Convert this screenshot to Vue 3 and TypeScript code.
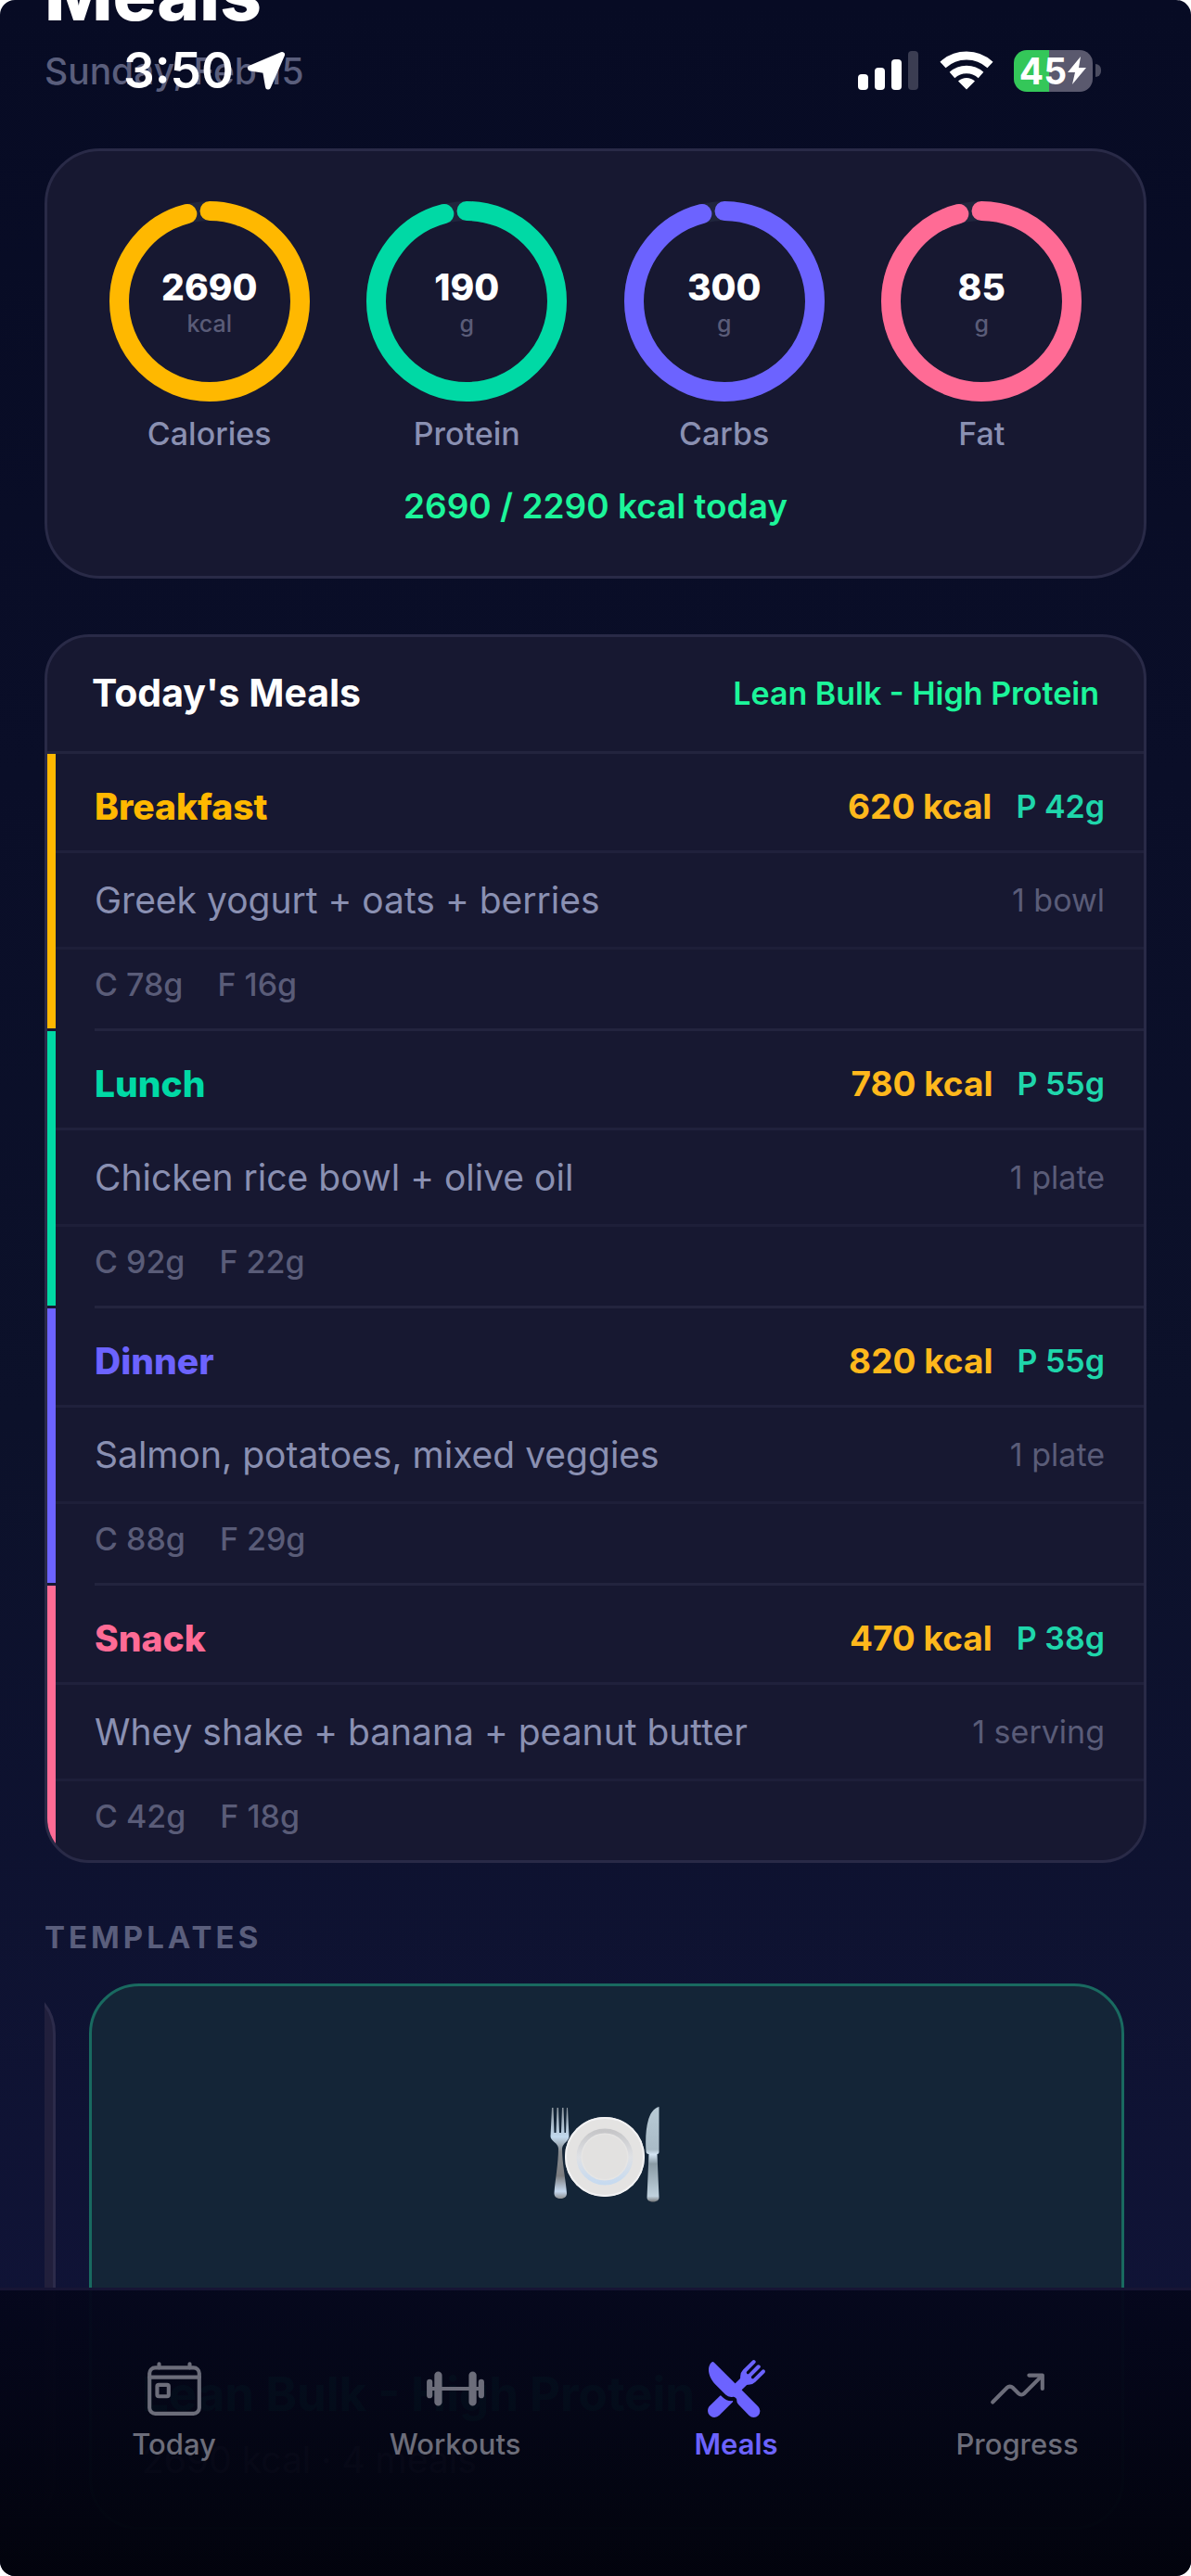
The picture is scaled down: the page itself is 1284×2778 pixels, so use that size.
<script setup lang="ts">
import { onMounted, ref } from 'vue'

interface Macro {
  label: string
  value: number
  unit: string
  tone: string
}

interface Meal {
  name: string
  tone: string
  kcal: number
  protein: number
  food: string
  portion: string
  carbs: number
  fat: number
}

const macros: Macro[] = [
  { label: 'Calories', value: 2690, unit: 'kcal', tone: 'amber' },
  { label: 'Protein', value: 190, unit: 'g', tone: 'mint' },
  { label: 'Carbs', value: 300, unit: 'g', tone: 'violet' },
  { label: 'Fat', value: 85, unit: 'g', tone: 'rose' },
]

const meals: Meal[] = [
  { name: 'Breakfast', tone: 'amber', kcal: 620, protein: 42, food: 'Greek yogurt + oats + berries', portion: '1 bowl', carbs: 78, fat: 16 },
  { name: 'Lunch', tone: 'mint', kcal: 780, protein: 55, food: 'Chicken rice bowl + olive oil', portion: '1 plate', carbs: 92, fat: 22 },
  { name: 'Dinner', tone: 'violet', kcal: 820, protein: 55, food: 'Salmon, potatoes, mixed veggies', portion: '1 plate', carbs: 88, fat: 29 },
  { name: 'Snack', tone: 'rose', kcal: 470, protein: 38, food: 'Whey shake + banana + peanut butter', portion: '1 serving', carbs: 42, fat: 18 },
]

// The carousel opens on the active template, the last one in the track.
const track = ref<HTMLElement | null>(null)
onMounted(() => {
  if (track.value) track.value.scrollLeft = track.value.scrollWidth
})
</script>

<template>
  <div class="screen">
    <main class="content">
      <header class="page-head">
        <h1>Meals</h1>
        <p>Sunday, Feb 15</p>
      </header>

      <section class="card summary">
        <div class="rings">
          <div v-for="m in macros" :key="m.label" class="macro" :class="m.tone">
            <div class="ring">
              <svg viewBox="0 0 216 216" aria-hidden="true">
                <circle class="ring-track" cx="108" cy="108" r="97.5" />
                <circle class="ring-fill" cx="108" cy="108" r="97.5" pathLength="100" transform="rotate(-90 108 108)" />
              </svg>
              <div class="ring-text">
                <strong>{{ m.value }}</strong>
                <span>{{ m.unit }}</span>
              </div>
            </div>
            <span class="macro-label">{{ m.label }}</span>
          </div>
        </div>
        <p class="total">2690 / 2290 kcal today</p>
      </section>

      <section class="card today">
        <header class="today-head">
          <h2>Today's Meals</h2>
          <span>Lean Bulk - High Protein</span>
        </header>
        <ul class="meals">
          <li v-for="meal in meals" :key="meal.name">
            <article class="meal" :class="meal.tone">
              <div class="meal-head">
                <h3>{{ meal.name }}</h3>
                <span class="kcal">{{ meal.kcal }} kcal</span>
                <span class="protein">P {{ meal.protein }}g</span>
              </div>
              <div class="meal-food">
                <span>{{ meal.food }}</span>
                <span class="portion">{{ meal.portion }}</span>
              </div>
              <div class="meal-meta">
                <span>C {{ meal.carbs }}g</span>
                <span>F {{ meal.fat }}g</span>
              </div>
            </article>
          </li>
        </ul>
      </section>

      <h2 class="section-title">TEMPLATES</h2>
      <div ref="track" class="templates">
        <article class="template"></article>
        <article class="template active">
          <div class="template-art">
            <svg viewBox="2 0 124 108" width="124" height="108" role="img" aria-label="Plate with fork and knife">
              <defs>
                <linearGradient id="steel" x1="0" y1="0" x2="0" y2="1">
                  <stop offset="0" stop-color="#8b949c" />
                  <stop offset="0.32" stop-color="#c3daee" />
                  <stop offset="0.48" stop-color="#85898d" />
                  <stop offset="0.75" stop-color="#7c7d80" />
                  <stop offset="0.92" stop-color="#c5d9f0" />
                  <stop offset="1" stop-color="#8e9092" />
                </linearGradient>
                <linearGradient id="blade" x1="0" y1="0" x2="0" y2="1">
                  <stop offset="0" stop-color="#b9cbd6" />
                  <stop offset="0.45" stop-color="#a9bbc6" />
                  <stop offset="0.5" stop-color="#d5e6f5" />
                  <stop offset="0.6" stop-color="#8a9ba5" />
                  <stop offset="0.94" stop-color="#c0d2de" />
                  <stop offset="1" stop-color="#77797b" />
                </linearGradient>
                <linearGradient id="rim" x1="0" y1="0" x2="0" y2="1">
                  <stop offset="0" stop-color="#c6c6c8" />
                  <stop offset="0.5" stop-color="#dfe1e5" />
                  <stop offset="1" stop-color="#c6daf0" />
                </linearGradient>
              </defs>
              <path fill="url(#steel)" d="M5 2h1.500l1 27h2l1-27h1.500l1 27h2l1-27h1.500l1 27h1.500l1-27h1l1.500 31c0 5-7 7-7.500 13 0 16 4 34 5 48 .5 8-14 8-13.500 0 1-14 4.500-32 4.500-48C12 40 3.500 38 3.500 33z" />
              <circle cx="62" cy="55" r="43" fill="#e4e3e2" />
              <circle cx="62" cy="55" r="42" fill="none" stroke="#f2f2f3" stroke-width="2" />
              <circle cx="62" cy="55" r="28" fill="#e6e5e4" stroke="url(#rim)" stroke-width="5" />
              <circle cx="62" cy="55" r="24" fill="#e2e1e0" />
              <path fill="url(#blade)" d="M120.500 1v49q0 2-2 2l2 47c0 6-13 6-13 0l2-47q-3 0-3-3C105 27 108 4 120.500 1z" />
            </svg>
          </div>
          <h3>Lean Bulk - High Protein</h3>
          <p>2690 kcal · 4 meals</p>
        </article>
      </div>
    </main>

    <div class="status-bar">
      <div class="clock">
        <span>3:50</span>
        <svg viewBox="0 0 42 42" width="42" height="42" aria-hidden="true">
          <path d="M38 4L4 18.500L20 21L23 38.500Z" fill="#fff" stroke="#fff" stroke-width="6" stroke-linejoin="round" />
        </svg>
      </div>
      <div class="indicators">
        <svg viewBox="0 0 66 42" width="66" height="42" aria-hidden="true" fill="#fff">
          <rect x="0" y="25" width="11" height="17" rx="4" />
          <rect x="18" y="18" width="11" height="24" rx="4" />
          <rect x="36" y="9" width="11" height="33" rx="4" />
          <rect x="54" y="0" width="11" height="42" rx="4" fill="#3b3d52" />
        </svg>
        <svg viewBox="0 0 58 42" width="58" height="42" aria-hidden="true" fill="none" stroke="#fff">
          <path d="M3.500 15A37.500 37.500 0 0 1 54.500 15" stroke-width="9" />
          <path d="M13.500 26A23.300 23.300 0 0 1 44.500 26" stroke-width="8.500" />
          <path d="M29 41.500L20 32.500A13 13 0 0 1 38 32.500Z" fill="#fff" stroke="none" />
        </svg>
        <div class="battery">
          <div class="battery-body">
            <span>45</span>
            <svg viewBox="0 0 22 32" width="22" height="32" aria-hidden="true">
              <path d="M15 1L1 18h8L6 31L21 13h-8z" fill="#fff" />
            </svg>
          </div>
          <div class="battery-tip"></div>
        </div>
      </div>
    </div>

    <nav class="tabs">
      <a href="#today">
        <svg viewBox="0 0 512 512" aria-hidden="true" fill="none" stroke="currentColor" stroke-width="32" stroke-linecap="round" stroke-linejoin="round">
          <rect x="48" y="80" width="416" height="384" rx="48" />
          <path d="M128 48v32M384 48v32M464 160H48" />
          <rect x="112" y="224" width="96" height="96" rx="13" />
        </svg>
        <span>Today</span>
      </a>
      <a href="#workouts">
        <svg viewBox="0 0 512 512" aria-hidden="true" fill="currentColor" stroke="currentColor" stroke-width="32" stroke-linecap="round" stroke-linejoin="round">
          <path d="M48 256h416" />
          <rect x="384" y="128" width="32" height="256" rx="16" />
          <rect x="96" y="128" width="32" height="256" rx="16" />
          <rect x="32" y="192" width="16" height="128" rx="8" />
          <rect x="464" y="192" width="16" height="128" rx="8" />
        </svg>
        <span>Workouts</span>
      </a>
      <a href="#meals" class="current" aria-current="page">
        <svg viewBox="0 0 512 512" aria-hidden="true" fill="currentColor">
          <path d="M357.57 223.94a79.48 79.48 0 0056.58-23.44l77-76.95c6.09-6.09 6.65-16 .85-22.39a16 16 0 00-23.17-.56l-68.63 68.58a12.29 12.29 0 01-17.37 0c-4.79-4.78-4.530-12.860.25-17.640l68.330-68.330a16 16 0 00-.56-23.160A15.620 15.620 0 00440.270 56a16.710 16.710 0 00-11.810 4.900l-68.270 68.260a12.290 12.290 0 01-17.370 0c-4.780-4.780-4.530-12.860.25-17.640l68.330-68.310a16 16 0 00-.56-23.160A15.620 15.620 0 00400.260 16a16.730 16.730 0 00-11.810 4.900L311.500 97.850a79.490 79.490 0 00-23.440 56.590v8.230a16 16 0 01-4.690 11.330l-35.610 35.620a4 4 0 01-5.660 0L68.820 36.330a16 16 0 00-22.580-.06C31.090 51.280 23 72.470 23 97.540c-.1 41.400 21.660 89 56.790 124.080l85.450 85.450A64.790 64.790 0 00211 326a64 64 0 0016.210-2.080 16.240 16.240 0 014.070-.53 15.930 15.930 0 0110.830 4.250l11.390 10.520a16.120 16.120 0 014.600 11.230v5.540a47.730 47.730 0 0013.770 33.650l90.050 91.570.09.1a53.290 53.290 0 0075.360-75.370L302.390 269.900a4 4 0 010-5.660L338 228.630a16 16 0 0111.320-4.690z" />
          <path d="M211 358a97.320 97.320 0 01-68.360-28.250l-13.860-13.860a8 8 0 00-11.300 0l-85 84.560c-15.150 15.150-20.560 37.450-13.060 59.290a30.630 30.630 0 001.490 3.600C31 484 50.580 496 72 496a55.680 55.680 0 0039.640-16.440L225 365.660a4.690 4.690 0 001.320-3.720v-.26a4.630 4.630 0 00-5.150-4.270A97.090 97.090 0 01211 358z" />
        </svg>
        <span>Meals</span>
      </a>
      <a href="#progress">
        <svg viewBox="0 0 512 512" aria-hidden="true" fill="none" stroke="currentColor" stroke-width="32" stroke-linecap="round" stroke-linejoin="round">
          <path d="M352 144h112v112" />
          <path d="M48 368l121.370-121.370a32 32 0 0145.260 0l50.740 50.740a32 32 0 0045.260 0L448 160" />
        </svg>
        <span>Progress</span>
      </a>
    </nav>
  </div>
</template>

<style>
body {
  margin: 0;
  background: #fff;
}
</style>

<style scoped>
.screen {
  position: relative;
  height: 100vh;
  overflow: hidden;
  border-radius: 16px;
  background: linear-gradient(180deg, #070b24 0%, #0a0e28 30%, #0c112a 55%, #11143a 100%);
  color: #fff;
  font-family: Inter, "Liberation Sans", sans-serif;
}

h1, h2, h3, p, ul {
  margin: 0;
  padding: 0;
}

svg {
  display: block;
}

.amber { --tone: #ffb800; }
.mint { --tone: #00d9a5; }
.violet { --tone: #6c63ff; }
.rose { --tone: #ff6b95; }

.content {
  padding: 0 48px;
}

/* The page is scrolled, so the title is partly above the top edge. */
.page-head {
  margin-top: -54px;
  padding-bottom: 59px;
}

.page-head h1 {
  font-size: 78px;
  line-height: 96px;
  font-weight: 800;
}

.page-head p {
  margin-top: 11px;
  font-size: 39px;
  line-height: 48px;
  font-weight: 500;
  color: #5a5e7c;
}

.card {
  border: 3px solid #292a47;
  background: #171831;
}

.summary {
  border-radius: 60px;
  padding: 54px 36px 51px;
}

.rings {
  display: grid;
  grid-template-columns: repeat(4, 1fr);
}

.macro {
  display: flex;
  flex-direction: column;
  align-items: center;
  gap: 14px;
}

.ring {
  display: grid;
  width: 216px;
  height: 216px;
}

.ring > * {
  grid-area: 1 / 1;
}

.ring circle {
  fill: none;
  stroke-width: 21;
}

.ring-track {
  stroke: #20253d;
}

.ring-fill {
  stroke: var(--tone);
  stroke-linecap: round;
  stroke-dasharray: 96 100;
}

.ring-text {
  display: flex;
  flex-direction: column;
  align-items: center;
  justify-content: center;
}

.ring-text strong {
  font-size: 39px;
  line-height: 48px;
  font-weight: 800;
}

.ring-text span {
  font-size: 25px;
  line-height: 30px;
  font-weight: 500;
  color: #5a5c78;
}

.macro-label {
  font-size: 34px;
  line-height: 42px;
  font-weight: 500;
  color: #8a90b2;
}

.total {
  margin-top: 33px;
  font-size: 37px;
  line-height: 48px;
  font-weight: 600;
  text-align: center;
  color: #1cf59a;
}

.today {
  margin-top: 60px;
  border-radius: 48px;
  overflow: hidden;
}

.today-head {
  display: flex;
  align-items: center;
  justify-content: space-between;
  padding: 35px 48px 37px;
  border-bottom: 3px solid #23243e;
}

.today-head h2 {
  font-size: 41px;
  line-height: 51px;
  font-weight: 700;
}

.today-head span {
  font-size: 34px;
  line-height: 42px;
  font-weight: 600;
  color: #1cf59a;
}

.meals {
  list-style: none;
}

.meals li + li::before {
  content: "";
  display: block;
  height: 3px;
  margin-left: 51px;
  background: #23243e;
}

.meal {
  border-left: 9px solid var(--tone);
}

.meal-head,
.meal-food,
.meal-meta {
  display: flex;
  align-items: center;
}

.meal-head {
  gap: 26px;
  padding: 33px 42px 23px;
  border-bottom: 3px solid #20213c;
}

.meal-head h3 {
  flex: 1;
  font-size: 39px;
  line-height: 48px;
  font-weight: 800;
  color: var(--tone);
}

.kcal {
  font-size: 37px;
  line-height: 42px;
  font-weight: 700;
  color: #ffb81c;
}

.protein {
  font-size: 34px;
  line-height: 42px;
  font-weight: 600;
  color: #1fd6ab;
}

.meal-food {
  justify-content: space-between;
  padding: 27px 42px 26px;
  border-bottom: 3px solid #1e1f39;
  font-size: 39px;
  line-height: 48px;
  color: #8a90b2;
}

.portion {
  font-size: 34px;
  line-height: 42px;
  color: #5a5c78;
}

.meal-meta {
  gap: 37px;
  padding: 17px 42px 26px;
  font-size: 34px;
  line-height: 42px;
  font-weight: 500;
  color: #5a5c78;
}

.section-title {
  margin: 59px 0 29px;
  font-size: 33px;
  line-height: 42px;
  font-weight: 700;
  letter-spacing: 4px;
  color: #5a5e7c;
}

.templates {
  display: flex;
  gap: 36px;
  padding-right: 24px;
  overflow-x: auto;
  scrollbar-width: none;
}

.template {
  box-sizing: border-box;
  flex: 0 0 calc(100% - 48px);
  padding: 0 54px 48px;
  border: 3px solid #2c2b4a;
  border-radius: 54px;
  background: #211f3c;
}

.template.active {
  border-color: #196a60;
  background: #142537;
}

.template-art {
  display: flex;
  align-items: center;
  justify-content: center;
  height: 366px;
  margin-bottom: 44px;
}

.template h3 {
  font-size: 51px;
  line-height: 60px;
  font-weight: 700;
  color: #00d9a5;
}

.template p {
  margin-top: 17px;
  font-size: 39px;
  line-height: 48px;
  color: #8a90b2;
}

.status-bar {
  position: absolute;
  top: 0;
  left: 0;
  right: 0;
  display: flex;
  align-items: center;
  justify-content: space-between;
  height: 152px;
  padding: 0 97px 0 133px;
}

.clock,
.indicators,
.battery,
.battery-body {
  display: flex;
  align-items: center;
}

.clock {
  gap: 14px;
  font-size: 53px;
  line-height: 60px;
  font-weight: 600;
}

.indicators {
  gap: 22px;
}

.battery {
  gap: 3px;
}

.battery-body {
  justify-content: center;
  width: 85px;
  height: 45px;
  border-radius: 14px;
  background: linear-gradient(90deg, #34c759 45%, #5a596e 45%);
  font-size: 39px;
  line-height: 45px;
  font-weight: 700;
}

.battery-tip {
  width: 6px;
  height: 14px;
  border-radius: 0 6px 6px 0;
  background: #4b4c60;
}

.tabs {
  position: absolute;
  left: 0;
  right: 0;
  bottom: 0;
  display: grid;
  grid-template-columns: repeat(4, 1fr);
  padding: 73px 36px 124px;
  border-top: 3px solid #171534;
  background: linear-gradient(180deg, rgba(5, 7, 28, 0.96), rgba(2, 3, 12, 0.98));
}

.tabs a {
  display: flex;
  flex-direction: column;
  align-items: center;
  gap: 9px;
  font-size: 31px;
  line-height: 36px;
  font-weight: 500;
  text-decoration: none;
  color: #6c6d7a;
}

.tabs svg {
  width: 66px;
  height: 66px;
}

.tabs .current {
  font-weight: 600;
  color: #6c63ff;
}
</style>
